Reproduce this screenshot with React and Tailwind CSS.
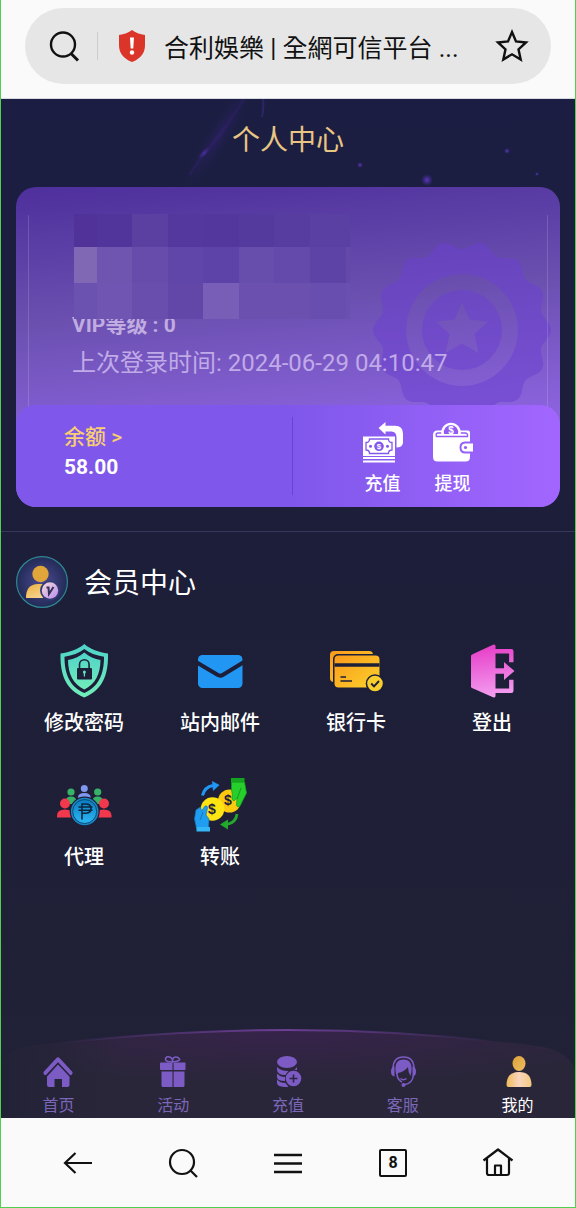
// src/pages/UserCenter.jsx
import { useState } from 'react';

const mosaic = [
  'bg-[#503299]', 'bg-[#52359b]', 'bg-[#5c40a1]', 'bg-[#55389d]', 'bg-[#54379d]', 'bg-[#553a9e]', 'bg-[#583da0]', 'bg-[#5b40a3]', 'bg-[#5b40a3]',
  'bg-[#8168b5]', 'bg-[#7055b0]', 'bg-[#674cab]', 'bg-[#6146a9]', 'bg-[#5d42a7]', 'bg-[#674dac]', 'bg-[#644aab]', 'bg-[#5e43a7]', 'bg-[#6449a9]',
  'bg-[#6c52b0]', 'bg-[#7055b2]', 'bg-[#694eae]', 'bg-[#6247a9]', 'bg-[#785eb6]', 'bg-[#6b50b0]', 'bg-[#6b50b0]', 'bg-[#684eae]', 'bg-[#6a50b0]',
];

const tabs = [
  { label: '首页', icon: HomeIcon },
  { label: '活动', icon: GiftIcon },
  { label: '充值', icon: CoinsIcon },
  { label: '客服', icon: ServiceIcon },
  { label: '我的', icon: UserIcon },
];

const menus = [
  { label: '修改密码', icon: ShieldIcon },
  { label: '站内邮件', icon: MailIcon },
  { label: '银行卡', icon: BankCardIcon },
  { label: '登出', icon: LogoutIcon },
  { label: '代理', icon: AgentIcon },
  { label: '转账', icon: TransferIcon },
];

/* ---------- Menu icons ---------- */

function ShieldIcon() {
  return (
    <svg viewBox="0 0 56 56" className="size-14" aria-hidden="true">
      <defs>
        <linearGradient id="shield" x1="0" y1="0" x2="0" y2="1">
          <stop offset="0" stopColor="#4fd3c9" />
          <stop offset="1" stopColor="#72edb9" />
        </linearGradient>
      </defs>
      <path fill="url(#shield)" d="M28.3 2C22 7.500 14 10 4.500 11.500C4 33 10 48 28.300 55.500C46.500 48 52.500 33 52 11.500C42.500 10 34.500 7.500 28.300 2Z" />
      <path fill="#1d1e38" d="M28.300 7C23 11 16.500 13.500 8.500 14.800C8.500 32 13.500 44.500 28.300 51C43 44.500 48 32 48 14.800C40 13.500 33.500 11 28.300 7Z" />
      <path fill="url(#shield)" d="M28.300 10.500C23.500 14.500 18 17 12 18C12.200 32 17 42 28.300 47.500C39.500 42 44.300 32 44.500 18C38.500 17 33 14.500 28.300 10.500Z" />
      <path d="M23.500 27V22.500a4.800 4.800 0 0 1 9.600 0V27" fill="none" stroke="#1d1e38" strokeWidth="1.600" />
      <rect x="21" y="26" width="15" height="11.500" rx="1" fill="#1d1e38" />
      <circle cx="28.400" cy="30" r="1.500" fill="#66e4be" />
      <path d="M28.400 30v4.500" stroke="#66e4be" strokeWidth="1.300" />
    </svg>
  );
}

function MailIcon() {
  return (
    <svg viewBox="0 0 56 56" className="size-14" aria-hidden="true">
      <rect x="6" y="13" width="44.500" height="33" rx="4.500" fill="#2196f3" />
      <path d="M4 20l21.500 12.800q2.800 1.700 5.600 0L52 20" fill="none" stroke="#1d1e38" strokeWidth="4" />
    </svg>
  );
}

function BankCardIcon() {
  return (
    <svg viewBox="0 0 56 56" className="size-14" aria-hidden="true">
      <defs>
        <linearGradient id="bank" x1="0" y1="0" x2="1" y2="1">
          <stop offset="0" stopColor="#fb9a1b" />
          <stop offset="1" stopColor="#fbd22c" />
        </linearGradient>
      </defs>
      <rect x="2" y="9" width="43" height="31" rx="4" fill="url(#bank)" />
      <rect x="5" y="12" width="47.500" height="35" rx="5" fill="#1d1e38" />
      <rect x="6.500" y="13.500" width="45" height="32" rx="4" fill="url(#bank)" />
      <path d="M6.500 23h45" stroke="#1d1e38" strokeWidth="3.600" />
      <path d="M12.500 35h5.500M12.500 39h11.500" stroke="#1d1e38" strokeWidth="1.400" />
      <circle cx="47" cy="41.500" r="9.300" fill="#1d1e38" />
      <circle cx="47" cy="41.500" r="7.800" fill="#f9cf2e" />
      <path d="M43.200 41.500l2.800 2.800 5-5.300" fill="none" stroke="#1d1e38" strokeWidth="1.900" />
    </svg>
  );
}

function LogoutIcon() {
  return (
    <svg viewBox="0 0 56 56" className="size-14" aria-hidden="true">
      <defs>
        <linearGradient id="logout" gradientUnits="userSpaceOnUse" x1="20" y1="2" x2="28" y2="56">
          <stop offset="0" stopColor="#e63bc6" />
          <stop offset="1" stopColor="#f3a0f2" />
        </linearGradient>
      </defs>
      <path fill="url(#logout)" d="M8 12.500L29 2.800q2.500-1 2.500 1.500v49.500q0 2.500-2.500 1.500L8 46q-1-.5-1-1.500V14q0-1 1-1.500Z" />
      <path d="M31 9.300h16.300v11M31 48.700h16.300v-11" fill="none" stroke="url(#logout)" strokeWidth="4.400" strokeLinejoin="round" />
      <path fill="url(#logout)" d="M31 26.200h9v-6.200L50.500 29 40 38v-6.200h-9z" />
    </svg>
  );
}

function AgentIcon() {
  return (
    <svg viewBox="0 0 56 56" className="size-14" aria-hidden="true">
      <defs>
        <linearGradient id="agent" x1="0" y1="0" x2="0" y2="1">
          <stop offset="0" stopColor="#0b7cc0" />
          <stop offset="1" stopColor="#2db8f5" />
        </linearGradient>
      </defs>
      <g fill="#7f97ee">
        <circle cx="28.300" cy="12.500" r="3.500" />
        <path d="M22 24v-2.500q0-4.500 6.300-4.500t6.300 4.500V24z" />
      </g>
      <g fill="#36b368">
        <circle cx="15" cy="16" r="3.600" />
        <path d="M9.500 26q0-5.500 5.500-5.500t5.500 5.500v2h-11z" />
        <circle cx="41.700" cy="16" r="3.600" />
        <path d="M36.200 26q0-5.500 5.500-5.500t5.500 5.500v2h-11z" />
      </g>
      <g fill="#f2384c">
        <circle cx="9" cy="27.500" r="5" />
        <path d="M1 41.500v-2Q1 33.500 9 33.500t8 6v2z" />
        <circle cx="48" cy="27.500" r="5" />
        <path d="M39.500 41.500v-2q0-6 8-6t8 6v2z" />
      </g>
      <circle cx="28.700" cy="35.500" r="15" fill="#1d1e38" />
      <circle cx="28.700" cy="35.500" r="13.800" fill="#1a87c4" />
      <circle cx="28.700" cy="35.500" r="12" fill="url(#agent)" stroke="#0a4a73" strokeWidth="1" />
      <path d="M26 43.500V28h4q5 0 5 4.600t-5 4.600h-4M22.500 31h14M22.500 34.300h14" fill="none" stroke="#0a2740" strokeWidth="1.600" />
    </svg>
  );
}

function TransferIcon() {
  return (
    <svg viewBox="0 0 56 56" className="size-14" aria-hidden="true">
      <circle cx="37.500" cy="25" r="11.500" fill="#fbc90e" />
      <circle cx="20.500" cy="33" r="11.800" fill="#ffe413" />
      <g fontFamily="Liberation Sans" fontWeight="700" fontSize="14" textAnchor="middle" fill="#1d1e38">
        <text x="20" y="38">$</text>
        <text x="36" y="29">$</text>
      </g>
      <path fill="#27cf2c" stroke="#149c1c" strokeWidth=".7" d="M39.500 6h13l2 11-6.500 13q-2.500 2-3.500-.5L45 22l-3 3q-3-1-1.500-6l-1-5z" />
      <path fill="#12a51d" d="M39 2h13.500v4.500H39z" />
      <path d="M49 12l-4 11" stroke="#149c1c" strokeWidth="1" />
      <path fill="#1f9df0" stroke="#1478c4" strokeWidth=".7" d="M4.500 52L2.500 43l1.500-9 4.500-3 1 4 3.500-5q2.500-1 2.500 2l-1.500 7 3 4-.5 9z" />
      <path fill="#35b6f7" d="M4.500 51h13.500v4.500H4.500z" />
      <path d="M8 44l3-8" stroke="#1478c4" strokeWidth="1" />
      <path d="M10.500 19.500q2-8.500 10.500-10" fill="none" stroke="#2196f3" strokeWidth="3" />
      <path d="M20 5l7.500 4-6.500 6z" fill="#2196f3" />
      <path d="M45 38q-1 8.500-10 10.500" fill="none" stroke="#23a92b" strokeWidth="2.800" />
      <path d="M36 43.500L28 48.500l8 5z" fill="#23a92b" />
    </svg>
  );
}

/* ---------- Balance panel icons ---------- */

function DepositIcon() {
  return (
    <svg viewBox="0 0 42 42" className="h-[42px] w-[42px]" aria-hidden="true">
      <path fill="#fff" d="M16.500 7L23.500 1v3.800H33q8 0 8 8V22q-1 4.500-6.500 4.500v-10q0-6-5-6h-6v3z" />
      <path fill="#fff" d="M1 15.500h32V35H1z" />
      <path d="M1 37h32M1 40.500h32" stroke="#fff" strokeWidth="2" />
      <path fill="none" stroke="#8457ec" strokeWidth="1.300" d="M7.500 18h19q0 3.500 3.500 3.500v7.500q-3.500 0-3.500 3.500h-19q0-3.500-3.500-3.500v-7.500q3.500 0 3.500-3.500z" />
      <circle cx="17" cy="25.300" r="4.800" fill="#8457ec" />
      <circle cx="8.500" cy="25.300" r="1.500" fill="#8457ec" />
      <circle cx="25.500" cy="25.300" r="1.500" fill="#8457ec" />
      <text x="17" y="28.300" textAnchor="middle" fontSize="8" fontWeight="700" fontFamily="Liberation Sans" fill="#fff">$</text>
    </svg>
  );
}

function WithdrawIcon() {
  return (
    <svg viewBox="0 0 42 42" className="h-[42px] w-[42px]" aria-hidden="true">
      <path fill="#fff" d="M5.500 9.500H36q2 0 2 2v9h-5q-5.500 0-5.500 6t5.500 6h5V36q0 4.500-4.500 4.500H5.500Q1 40.500 1 36V14q0-4.500 4.500-4.500z" />
      <path d="M4.500 15.500q-1.500-3.500 2-3.500H33q3 0 2.500 3.500z" fill="#fff" stroke="#925cf4" strokeWidth="1.400" />
      <path d="M9.500 14a9.800 9.800 0 1 1 19 0z" fill="#fff" />
      <path d="M12 13a7.200 7.200 0 1 1 14 0z" fill="#925cf4" />
      <text x="19" y="12.500" textAnchor="middle" fontSize="10" fontWeight="700" fontFamily="Liberation Sans" fill="#fff">$</text>
      <path fill="#fff" d="M41 22.500h-7.500q-4 0-4 4t4 4H41z" />
      <circle cx="33.500" cy="26.500" r="1.600" fill="#925cf4" />
    </svg>
  );
}

function MemberIcon() {
  return (
    <svg viewBox="0 0 52 52" className="size-13" aria-hidden="true">
      <defs>
        <radialGradient id="member-bg">
          <stop offset="0" stopColor="#4d4b94" />
          <stop offset="1" stopColor="#222b56" />
        </radialGradient>
        <linearGradient id="member-body" x1="0" y1="0" x2="1" y2="1">
          <stop offset="0" stopColor="#ebb13d" />
          <stop offset="1" stopColor="#fbe0b0" />
        </linearGradient>
        <linearGradient id="member-badge" x1="0" y1="0" x2="1" y2="1">
          <stop offset="0" stopColor="#f6dcd8" />
          <stop offset="1" stopColor="#b98ef0" />
        </linearGradient>
      </defs>
      <circle cx="26" cy="26" r="25.400" fill="url(#member-bg)" stroke="#2f8791" strokeWidth="1.200" />
      <circle cx="24.500" cy="18" r="8.200" fill="#e0a63a" />
      <path d="M10 42q0-14 12-14h8q8 0 9 14z" fill="url(#member-body)" />
      <circle cx="34" cy="34.500" r="10" fill="#343a74" />
      <circle cx="34" cy="34.500" r="8.200" fill="url(#member-badge)" />
      <path d="M30.500 31.500h2l.5 6.500 4.500-7" fill="none" stroke="#33305c" strokeWidth="2" />
    </svg>
  );
}

/* ---------- Tab bar icons ---------- */

function HomeIcon() {
  return (
    <svg viewBox="0 0 32 32" className="size-8" fill="#7c5cc4" aria-hidden="true">
      <path d="M3.500 18L16 4.500 28.500 18" fill="none" stroke="#7c5cc4" strokeWidth="4.200" strokeLinecap="round" strokeLinejoin="round" />
      <path d="M16 9.500l11.500 12V30q0 2-2 2H20v-8h-7.500v8H7q-2 0-2-2v-8.500z" />
      <path d="M3.500 21.500L16 8.200l12.500 13.300" fill="none" stroke="#2a2440" strokeWidth="1.200" />
    </svg>
  );
}

function GiftIcon() {
  return (
    <svg viewBox="0 0 32 32" className="size-8" fill="#7c5cc4" aria-hidden="true">
      <path d="M15.500 7Q8 7 8.500 4t4-2 3 5q0-5 3-5t4 2-7 3z" fill="none" stroke="#7c5cc4" strokeWidth="1.600" />
      <path d="M3.500 7.500h12v7.500H4q-1 0-1-1V8.500zM16.600 7.500h11.400q.5 0 .5 1V14q0 1-1 1H16.600zM4.500 16.500h11V32H6q-1.500 0-1.500-1.500zM16.600 16.500H27.500v14q0 1.500-1.500 1.500h-9.400z" />
    </svg>
  );
}

function CoinsIcon() {
  return (
    <svg viewBox="0 0 32 32" className="size-8" fill="#7c5cc4" aria-hidden="true">
      <ellipse cx="15" cy="7" rx="10" ry="6" />
      <path d="M5 12q4 4.500 12 4l-3 4q-8 .5-9-5zM5 18.500q3 3.500 8 3.500v4q-8 0-8-4zM5 24.500q3 3.500 8.500 3.500l3 4Q5 32.500 5 28z" />
      <path d="M18 15.500q5 0 7-3.500v3.500z" />
      <circle cx="21.500" cy="23" r="8.500" fill="#2c2440" />
      <circle cx="21.500" cy="23.500" r="7.800" />
      <path d="M21.500 19.500v8M17.500 23.500h8" stroke="#2c2440" strokeWidth="1.600" />
    </svg>
  );
}

function ServiceIcon() {
  return (
    <svg viewBox="0 0 32 32" className="size-8" fill="#7c5cc4" aria-hidden="true">
      <path d="M6 14Q6 2 16.500 2T27 14" fill="none" stroke="#7c5cc4" strokeWidth="1.600" />
      <path d="M8.500 16Q7.500 4.500 16.500 4.500T24.500 16l-1 5q-2.500-4-2.500-9-4 5-10 6l-.5 3.500Q8.500 19 8.500 16z" />
      <path d="M7.500 11.500v10Q4 21 4 16.500t3.500-5zM25.500 11.500v10q3.500-.5 3.500-5t-3.500-5z" />
      <path d="M10 20q1 5 5 7M26.500 20q-1 8.500-9 9.800M13.500 23.500q3 2.500 6 0" fill="none" stroke="#7c5cc4" strokeWidth="1.500" />
      <circle cx="16.500" cy="30" r="2" />
    </svg>
  );
}

function UserIcon() {
  return (
    <svg viewBox="0 0 32 32" className="size-8" aria-hidden="true">
      <defs>
        <linearGradient id="user-head" x1="0" y1="0" x2="1" y2="1">
          <stop offset="0" stopColor="#dca038" />
          <stop offset="1" stopColor="#efbf62" />
        </linearGradient>
        <linearGradient id="user-body" x1="0" y1="0" x2="1" y2="0">
          <stop offset="0" stopColor="#f0bb58" />
          <stop offset=".5" stopColor="#f8d5bf" />
          <stop offset="1" stopColor="#f3ca7c" />
        </linearGradient>
      </defs>
      <ellipse cx="17" cy="8.500" rx="6.500" ry="7.500" fill="url(#user-head)" />
      <path d="M4.500 30q0-13 12.500-13t12.500 13q0 2-2 2h-21q-2 0-2-2z" fill="url(#user-body)" />
    </svg>
  );
}

/* ---------- Medal watermark ---------- */

// Rosette outline with 14 soft lobes
const rosette = Array.from({ length: 168 }, (_, i) => {
  const a = (i / 168) * Math.PI * 2;
  const r = 85 + 4 * Math.cos(14 * a);
  return `${(90 + r * Math.cos(a)).toFixed(1)} ${(90 + r * Math.sin(a)).toFixed(1)}`;
}).join('L');

function Medal() {
  return (
    <svg viewBox="0 0 180 180" className="absolute top-[53px] right-2 size-[180px]" aria-hidden="true">
      <path fill="#6b42d0" fillOpacity=".55" fillRule="evenodd" d={`M${rosette}ZM90 34a56 56 0 1 0 0 112a56 56 0 1 0 0-112Z`} />
      <path
        fill="#6b42d0"
        fillOpacity=".55"
        fillRule="evenodd"
        d="M90 50a40 40 0 1 0 0 80a40 40 0 1 0 0-80ZM90 62L97.500 79.500 116 81.500 102.500 94 106.500 113 90 103.500 73.500 113 77.500 94 64 81.500 82.500 79.500Z"
      />
    </svg>
  );
}

/* ---------- Night sky behind the page title ---------- */

function Sky() {
  return (
    <svg viewBox="0 0 576 90" preserveAspectRatio="xMidYMin slice" className="absolute inset-x-0 top-0 h-[90px] w-full" aria-hidden="true">
      <defs>
        <radialGradient id="spark">
          <stop offset="0" stopColor="#5c38bc" />
          <stop offset="1" stopColor="#4a2ca8" stopOpacity="0" />
        </radialGradient>
        <radialGradient id="nebula">
          <stop offset="0" stopColor="#3a2380" stopOpacity=".4" />
          <stop offset="1" stopColor="#2a1f66" stopOpacity="0" />
        </radialGradient>
      </defs>
      <ellipse cx="218" cy="38" rx="62" ry="12" fill="url(#nebula)" transform="rotate(-58 218 38)" />
      <path d="M244 0Q228 26 210 48T190 76" fill="none" stroke="#3f2590" strokeOpacity=".2" strokeWidth="3" />
      <path d="M263 0Q264 10 262 18" fill="none" stroke="#4a2ca0" strokeOpacity=".4" strokeWidth="2" />
      <ellipse cx="204" cy="54" rx="8" ry="3" fill="url(#spark)" fillOpacity=".7" transform="rotate(-45 204 54)" />
      <circle cx="427" cy="81" r="6" fill="url(#spark)" />
      <circle cx="360" cy="66" r="3" fill="url(#spark)" />
      <circle cx="507" cy="52" r="3" fill="url(#spark)" />
      <circle cx="537" cy="75" r="2" fill="url(#spark)" />
    </svg>
  );
}

export default function App() {
  const [activeTab, setActiveTab] = useState('我的');

  return (
    <div className="flex min-h-screen flex-col border-x border-b border-[#4fd04f] bg-[#fafafa] font-['Roboto','Noto_Sans_CJK_SC',sans-serif]">
      {/* Address bar */}
      <header className="border-b border-[#d8d8e0] px-6 pt-2 pb-3.5">
        <div className="flex h-19 items-center rounded-full bg-[#e6e6e6] px-6">
          <button type="button" aria-label="搜索">
            <svg viewBox="0 0 32 32" className="size-8" fill="none" stroke="#111" strokeWidth="2.400" aria-hidden="true">
              <circle cx="14" cy="14.500" r="12" />
              <path d="M22 23.500l7 7" strokeWidth="3" />
            </svg>
          </button>
          <div className="ml-4 h-7 w-px bg-[#cdcdcd]" />
          <svg viewBox="0 0 28 32" className="ml-5 h-8 w-7 shrink-0" aria-hidden="true">
            <path fill="#db3429" d="M14 0q5 4 13 5V15q0 12-13 17Q1 27 1 15V5Q9 4 14 0z" />
            <path d="M12 7.500h4l-.7 11h-2.600z" fill="#fff" />
            <circle cx="14" cy="22.500" r="2.200" fill="#fff" />
          </svg>
          <input
            type="text"
            aria-label="地址栏"
            defaultValue="合利娛樂 | 全網可信平台 ..."
            className="ml-[18px] h-10 min-w-0 flex-1 bg-transparent font-['Roboto','Noto_Sans_CJK_TC',sans-serif] text-[25px] text-[#111] outline-none"
          />
          <button type="button" aria-label="收藏" className="-mr-1">
            <svg viewBox="0 0 36 36" className="size-9" fill="none" stroke="#111" strokeWidth="2.400" aria-hidden="true">
              <path d="M17 4l4 9.500 10 1-7.500 6.800 2.200 10.200-8.700-5.200-8.700 5.200 2.200-10.200L3 14.500l10-1z" />
            </svg>
          </button>
        </div>
      </header>

      <main className="relative flex flex-1 flex-col bg-linear-to-b from-[#1b1e42] via-[#1d1e38] via-50% to-[#212236]">
        <Sky />
        <h1 className="relative mt-[22px] text-center text-[28px] leading-10 text-[#e9c583]">个人中心</h1>

        {/* Member card */}
        <section className="relative mx-[15px] mt-[26px] overflow-hidden rounded-[20px] bg-linear-[175deg] from-[#4e2f9c] via-[#6b50b0] via-38% to-[#8a62dc] to-72%">
          <Medal />
          <div className="absolute inset-x-3 top-7 h-48 border-x border-white/15" />
          <div className="relative pt-[27px] pb-[26px] pl-14">
            <div className="relative z-10 ml-0.5 grid w-fit grid-cols-[23px_35px_36px_35px_36px_35px_36px_36px_4px] grid-rows-[33px_36px_36px]">
              {mosaic.map((color, index) => (
                <div key={index} className={color} />
              ))}
            </div>
            <p className="-mt-2 text-[21px] leading-7 font-bold text-[#c0ace0]">VIP等级 : 0</p>
            <p className="mt-2 text-2xl leading-8 text-[#c0aae8]">上次登录时间: 2024-06-29 04:10:47</p>
          </div>

          {/* Balance */}
          <div className="relative grid grid-cols-[30fr_29fr] rounded-[20px] bg-linear-to-r from-[#7f57ea] from-50% to-[#a266ff]">
            <div className="my-3 border-r border-[#6a43cf] pt-1 pl-12">
              <a href="#balance" className="block text-[21px] leading-8 font-medium text-[#f9cf70]">余额 &gt;</a>
              <p className="text-[21px] leading-7 font-bold text-white">58.00</p>
            </div>
            <div className="flex pt-4 pb-[11px] pl-[55px]">
              <button type="button" className="flex w-[70px] flex-col items-center gap-[9px] text-lg leading-6 font-medium text-white">
                <DepositIcon />
                充值
              </button>
              <button type="button" className="flex w-[70px] flex-col items-center gap-[9px] text-lg leading-6 font-medium text-white">
                <WithdrawIcon />
                提现
              </button>
            </div>
          </div>
        </section>

        {/* Member center */}
        <section className="mt-6 border-t border-[#38375a] px-[15px] pt-6">
          <div className="flex items-center gap-4">
            <MemberIcon />
            <h2 className="pt-1 text-[28px] leading-10 text-white">会员中心</h2>
          </div>
          <div className="mt-[34px] mb-10 grid grid-cols-4 gap-y-[39px]">
            {menus.map(({ label, icon: Icon }) => (
              <button key={label} type="button" className="flex flex-col items-center gap-[11px] text-xl leading-7 font-medium text-white">
                <Icon />
                {label}
              </button>
            ))}
          </div>
        </section>

        {/* Tab bar */}
        <nav className="relative mt-auto">
          <svg viewBox="0 0 576 90" preserveAspectRatio="none" className="absolute inset-0 size-full" aria-hidden="true">
            <defs>
              <radialGradient id="tab-bg" cx=".5" cy="0" r=".6">
                <stop offset="0" stopColor="#37234b" />
                <stop offset="1" stopColor="#2a263a" />
              </radialGradient>
              <linearGradient id="tab-fade" x1="0" y1="0" x2="1" y2="0">
                <stop offset="0" stopColor="#222236" />
                <stop offset=".4" stopColor="#222236" stopOpacity="0" />
              </linearGradient>
              <linearGradient id="tab-line" x1="0" y1="0" x2="1" y2="0">
                <stop offset=".05" stopColor="#6b3f96" stopOpacity="0" />
                <stop offset=".5" stopColor="#6b3f96" />
                <stop offset=".92" stopColor="#6b3f96" stopOpacity="0" />
              </linearGradient>
            </defs>
            <path fill="url(#tab-bg)" d="M0 38Q8 20 30 17C110 8 200 1 288 1S466 8 536 17Q566 20 576 40V90H0Z" />
            <path fill="url(#tab-fade)" d="M0 38Q8 20 30 17C110 8 200 1 288 1V90H0Z" />
            <path d="M30 17C110 8 200 1 288 1S466 8 536 17" fill="none" stroke="url(#tab-line)" strokeWidth="2" />
          </svg>
          <div className="relative grid grid-cols-5 pt-[26px] pb-0.5">
            {tabs.map(({ label, icon: Icon }) => (
              <button
                key={label}
                type="button"
                onClick={() => setActiveTab(label)}
                className={`flex flex-col items-center gap-[9px] text-base leading-5 ${activeTab === label ? 'text-white' : 'text-[#7a67b8]'}`}
              >
                <Icon />
                {label}
              </button>
            ))}
          </div>
        </nav>
      </main>

      {/* Browser toolbar */}
      <footer className="grid h-[89px] grid-cols-5 justify-items-center px-6">
        <button type="button" aria-label="返回">
          <svg viewBox="0 0 32 32" className="size-8" fill="none" stroke="#111" strokeWidth="2.200" aria-hidden="true">
            <path d="M30 16H3M13.500 6L3 16l10.500 10" />
          </svg>
        </button>
        <button type="button" aria-label="查找">
          <svg viewBox="0 0 32 32" className="size-8" fill="none" stroke="#111" strokeWidth="2.200" aria-hidden="true">
            <circle cx="15" cy="15" r="12" />
            <path d="M23.500 23.500l6.500 6.500" />
          </svg>
        </button>
        <button type="button" aria-label="菜单">
          <svg viewBox="0 0 32 32" className="size-8" stroke="#111" strokeWidth="2.400" aria-hidden="true">
            <path d="M2 8h28M2 16.500h28M2 25h28" />
          </svg>
        </button>
        <button type="button" aria-label="标签页">
          <span className="flex size-7 items-center justify-center rounded-xs border-2 border-[#111] text-base font-bold text-[#111]">8</span>
        </button>
        <button type="button" aria-label="主页">
          <svg viewBox="0 0 32 32" className="size-8" fill="none" stroke="#111" strokeWidth="2.200" strokeLinejoin="round" aria-hidden="true">
            <path d="M1.500 13.500L16 2.500l14.500 11M5 11.500V26q0 2 2 2h18q2 0 2-2V11.500" />
            <path d="M13 28v-9.500h6V28" />
          </svg>
        </button>
      </footer>
    </div>
  );
}
